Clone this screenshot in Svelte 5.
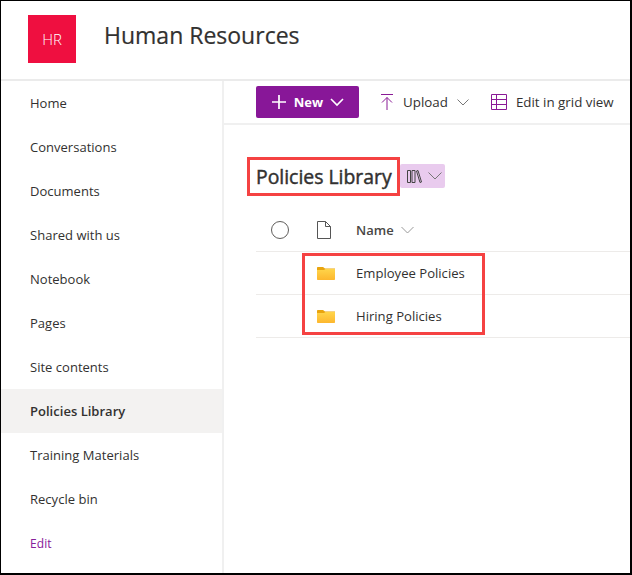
<script>
  const navItems = [
    'Home', 'Conversations', 'Documents', 'Shared with us', 'Notebook',
    'Pages', 'Site contents', 'Policies Library', 'Training Materials', 'Recycle bin'
  ];
  const files = ['Employee Policies', 'Hiring Policies'];
</script>

<div class="frame">
  <header class="site-header">
    <div class="logo">HR</div>
    <h1>Human Resources</h1>
  </header>

  <div class="body">
    <nav class="sidenav">
      {#each navItems as item}
        <div class="nav-item" class:active={item === 'Policies Library'}>{item}</div>
      {/each}
      <div class="nav-item edit">Edit</div>
    </nav>

    <main class="content">
      <div class="commandbar">
        <button class="new-btn">
          <svg width="16" height="16" viewBox="0 0 16 16"><path d="M8 1v14M1 8h14" stroke="#fff" stroke-width="1.7" fill="none"/></svg>
          <span>New</span>
          <svg width="14" height="14" viewBox="0 0 14 14"><path d="M1 4l6 6 6-6" stroke="#fff" stroke-width="1.6" fill="none"/></svg>
        </button>
        <div class="cmd upload">
          <svg width="14" height="18" viewBox="0 0 14 18"><path d="M1 1.500h12M7 17V4.500M2 9.500l5-5 5 5" stroke="#8a1a96" stroke-width="1" fill="none"/></svg>
          <span>Upload</span>
          <svg width="12" height="12" viewBox="0 0 12 12"><path d="M.5 3.500L6 9l5.500-5.500" stroke="#777" stroke-width="1" fill="none"/></svg>
        </div>
        <div class="cmd grid">
          <svg width="16" height="16" viewBox="0 0 16 16"><path d="M.5.500h15v15H.500zM.5 5.500h15M.5 10.500h15M5.500.5v15" stroke="#8a1a96" stroke-width="1" fill="none"/></svg>
          <span>Edit in grid view</span>
        </div>
      </div>

      <div class="library">
        <div class="title-row">
          <h2>Policies Library</h2>
          <div class="view-pill">
            <svg width="15" height="13" viewBox="0 0 15 13"><path d="M.5.500h3v12h-3zM5 .5h3v12H5zM9.500 1l1.500-.5 3.500 11.500-1.500.5z" stroke="#444" stroke-width="1" fill="none"/></svg>
            <svg width="14" height="10" viewBox="0 0 14 10"><path d="M.5 1.500L7 8l6.500-6.500" stroke="#777" stroke-width="1" fill="none"/></svg>
          </div>
        </div>

        <div class="row head">
          <span class="col-check"><span class="circle"></span></span>
          <span class="col-icon">
            <svg width="14" height="18" viewBox="0 0 14 18"><path d="M.5.500h8l5 5v12H.500zM8.500.5v5h5" stroke="#555" stroke-width="1" fill="none"/></svg>
          </span>
          <span class="name">Name</span>
          <svg class="name-chev" width="13" height="8" viewBox="0 0 13 8"><path d="M.5 1l6 6 6-6" stroke="#999" stroke-width="1" fill="none"/></svg>
        </div>

        {#each files as file}
          <div class="row">
            <span class="col-check"></span>
            <span class="col-icon">
              <svg width="18" height="13" viewBox="0 0 18 13">
                <defs>
                  <linearGradient id="folder" x1="0" y1="0" x2="0" y2="1">
                    <stop offset="0" stop-color="#ffd54a"/>
                    <stop offset="1" stop-color="#fdb72e"/>
                  </linearGradient>
                </defs>
                <path d="M0 1C0 .4.400 0 1 0h5l2 1.500h10v2H0z" fill="#e9a50e"/>
                <path d="M0 3h7l1.500-1H18v10.300c0 .4-.3.700-.7.700H.7c-.4 0-.7-.3-.7-.7z" fill="url(#folder)"/>
              </svg>
            </span>
            <span class="file-name">{file}</span>
          </div>
        {/each}
      </div>
    </main>
  </div>

  <div class="callout title-callout"></div>
  <div class="callout files-callout"></div>
</div>

<style>
  :global(body) {
    margin: 0;
  }

  .frame {
    position: relative;
    box-sizing: border-box;
    width: 632px;
    height: 575px;
    display: flex;
    flex-direction: column;
    overflow: hidden;
    background: #fff;
    border: 1px solid #000;
    border-right-width: 2px;
    border-bottom-width: 2px;
    font-family: "Open Sans", "Noto Sans", sans-serif;
    color: #323130;
  }

  .site-header {
    flex: none;
    display: flex;
    align-items: center;
    box-sizing: border-box;
    height: 80px;
    padding: 0 0 9px 27px;
    border-bottom: 2px solid #ebebeb;
  }

  .logo {
    width: 48px;
    height: 48px;
    margin-top: 7px;
    background: #ef0f40;
    color: #fff;
    font-size: 15px;
    font-weight: 300;
    display: flex;
    align-items: center;
    justify-content: center;
  }

  h1 {
    margin: 0 0 0 28px;
    font-size: 23px;
    font-weight: 500;
    -webkit-text-stroke: 0.2px #323130;
    position: relative;
    top: -1px;
  }

  .body {
    flex: 1;
    display: flex;
    min-height: 0;
  }

  .sidenav {
    width: 223px;
    flex: none;
    box-sizing: border-box;
    border-right: 2px solid #f0f0f0;
  }

  .nav-item {
    height: 44px;
    display: flex;
    align-items: center;
    padding-left: 29px;
    font-size: 13px;
    letter-spacing: 0.02px;
  }

  .nav-item.active {
    background: #f3f2f1;
    font-weight: 600;
  }

  .nav-item.edit {
    color: #86209a;
    font-size: 12px;
    letter-spacing: 0.1px;
  }

  .content {
    flex: 1;
    min-width: 0;
  }

  .commandbar {
    height: 44px;
    display: flex;
    align-items: center;
    box-sizing: border-box;
    border-bottom: 2px solid #f0f0f0;
    padding: 0 0 0 32px;
    font-size: 13.35px;
  }

  .new-btn {
    width: 103px;
    height: 32px;
    margin-right: 21px;
    display: flex;
    align-items: center;
    justify-content: center;
    gap: 7px;
    border: 0;
    border-radius: 2px;
    background: #881798;
    color: #fff;
    font: 700 13px "Open Sans", sans-serif;
    padding: 0;
  }

  .cmd {
    display: flex;
    align-items: center;
    white-space: nowrap;
  }

  .cmd.upload {
    gap: 9px;
    margin-right: 22px;
  }

  .cmd.grid {
    gap: 9px;
  }

  .library {
    padding: 0 0 0 32px;
  }

  .title-row {
    display: flex;
    align-items: flex-start;
    padding-top: 39px;
    box-sizing: border-box;
    height: 84px;
  }

  h2 {
    margin: 1px 0 0;
    font-size: 19.4px;
    font-weight: 500;
    line-height: 24px;
    width: 144px;
    white-space: nowrap;
    -webkit-text-stroke: 0.45px #323130;
  }

  .view-pill {
    width: 45px;
    height: 24px;
    box-sizing: border-box;
    padding-left: 3px;
    background: #e9cbee;
    border-radius: 2px;
    display: flex;
    align-items: center;
    justify-content: center;
    gap: 6px;
  }

  .row {
    height: 43px;
    box-sizing: border-box;
    display: flex;
    align-items: center;
    border-bottom: 1px solid #edebe9;
    font-size: 13px;
  }

  .file-name {
    font-size: 13.1px;
  }

  .col-check {
    width: 47px;
    flex: none;
    display: flex;
    padding-left: 15px;
    box-sizing: border-box;
  }

  .circle {
    box-sizing: border-box;
    width: 18px;
    height: 18px;
    border-radius: 50%;
    border: 1px solid #605e5c;
  }

  .col-icon {
    width: 53px;
    flex: none;
    padding-left: 14px;
    box-sizing: border-box;
    display: flex;
  }

  .name {
    font-weight: 600;
    color: #484644;
  }

  .name-chev {
    margin-left: 7px;
  }

  .callout {
    position: absolute;
    box-sizing: border-box;
    border: 3px solid #f54242;
    pointer-events: none;
  }

  .title-callout {
    left: 246px;
    top: 156px;
    width: 153px;
    height: 39px;
  }

  .files-callout {
    left: 301px;
    top: 252px;
    width: 183px;
    height: 82px;
  }
</style>
